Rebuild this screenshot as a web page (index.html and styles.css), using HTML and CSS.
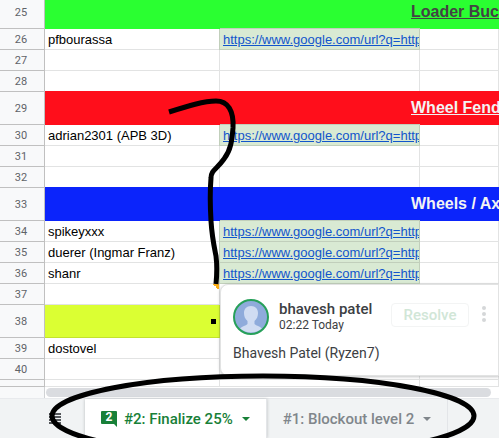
FILE: index.html
```html
<!DOCTYPE html>
<html lang="en">
<head>
    <meta charset="UTF-8">
    <title>Spreadsheet</title>
    <link rel="stylesheet" href="styles.css">
</head>
<body>
    <div class="app">
        <main class="sheet">
            <table class="grid">
                <colgroup>
                    <col class="col-num">
                    <col class="col-name">
                    <col class="col-url">
                    <col>
                </colgroup>
                <tbody>
                    <tr class="first"><th>25</th><td colspan="3" class="heading green">Loader Buc</td></tr>
                    <tr><th>26</th><td>pfbourassa</td><td class="link"><a href="#">https://www.google.com/url?q=http</a></td><td></td></tr>
                    <tr><th>27</th><td></td><td></td><td></td></tr>
                    <tr><th>28</th><td></td><td></td><td></td></tr>
                    <tr class="tall"><th>29</th><td colspan="3" class="heading red">Wheel Fend</td></tr>
                    <tr><th>30</th><td>adrian2301 (APB 3D)</td><td class="link"><a href="#">https://www.google.com/url?q=http</a></td><td></td></tr>
                    <tr><th>31</th><td></td><td></td><td></td></tr>
                    <tr><th>32</th><td></td><td></td><td></td></tr>
                    <tr class="tall"><th>33</th><td colspan="3" class="heading blue">Wheels / Ax</td></tr>
                    <tr><th>34</th><td>spikeyxxx</td><td class="link"><a href="#">https://www.google.com/url?q=http</a></td><td></td></tr>
                    <tr><th>35</th><td>duerer (Ingmar Franz)</td><td class="link"><a href="#">https://www.google.com/url?q=http</a></td><td></td></tr>
                    <tr><th>36</th><td>shanr</td><td class="link"><a href="#">https://www.google.com/url?q=http</a></td><td></td></tr>
                    <tr><th>37</th><td class="noted"></td><td></td><td></td></tr>
                    <tr class="tall"><th>38</th><td class="yellow"><span class="dot"></span></td><td class="yellow"></td><td class="yellow"></td></tr>
                    <tr><th>39</th><td>dostovel</td><td></td><td></td></tr>
                    <tr><th>40</th><td></td><td></td><td></td></tr>
                    <tr class="last"><th></th><td></td><td></td><td></td></tr>
                </tbody>
            </table>

            <section class="comment">
                <header class="comment-head">
                    <svg class="avatar" width="36" height="36" viewBox="0 0 36 36">
                        <circle cx="18" cy="18" r="17" fill="#8fabdb"/>
                        <path d="M18 7c-4.500 0-7 3-7 7 0 3 1 6 3.500 8v3c-2 2-5 2-7.500 4.500A17 17 0 0 0 29 29.500c-2.500-2.500-5.500-2.500-7.500-4.500v-3c2.500-2 3.500-5 3.500-8 0-4-2.500-7-7-7z" fill="#d0dcf2"/>
                        <circle cx="18" cy="18" r="17" fill="none" stroke="#27a05a" stroke-width="2"/>
                    </svg>
                    <div class="who">
                        <div class="author">bhavesh patel</div>
                        <div class="time">02:22 Today</div>
                    </div>
                    <button class="resolve">Resolve</button>
                    <button class="more" aria-label="More options">
                        <svg width="6" height="18" viewBox="0 0 6 18" fill="#d5d7d9">
                            <circle cx="3" cy="3" r="2"/>
                            <circle cx="3" cy="9" r="2"/>
                            <circle cx="3" cy="15" r="2"/>
                        </svg>
                    </button>
                </header>
                <p class="comment-text">Bhavesh Patel (Ryzen7)</p>
            </section>
        </main>

        <div class="scroll">
            <div class="track"><div class="thumb"></div></div>
        </div>

        <footer class="tabs">
            <button class="all-sheets" aria-label="All sheets">
                <svg width="12" height="12" viewBox="0 0 12 12" fill="#55585c">
                    <path d="M0 0h12v2H0zM0 3h12v2H0zM0 6h12v2H0zM0 9h12v2H0z"/>
                </svg>
            </button>
            <button class="tab active">
                <span class="badge">
                    <svg width="16" height="16" viewBox="0 0 16 16" fill="#188038">
                        <path d="M1 0h14a1 1 0 0 1 1 1v15l-3-3H1a1 1 0 0 1-1-1V1a1 1 0 0 1 1-1z"/>
                    </svg>
                    <span class="count">2</span>
                </span>
                <span class="label">#2: Finalize 25%</span>
                <span class="caret"></span>
            </button>
            <button class="tab">
                <span class="label">#1: Blockout level 2</span>
                <span class="caret"></span>
            </button>
        </footer>

        <!-- marker strokes -->
        <svg class="marker" width="499" height="438" viewBox="0 0 499 438">
            <path d="M169 112C188 106 204 101 216 101C228 101 234 111 233 128C232 140 231 150 224 159C217 169 211 170 211 178C210 190 210 204 211 221C212 237 214 246 216 256C217 264 217 274 216 284"/>
            <ellipse cx="263" cy="416" rx="211" ry="40"/>
        </svg>
    </div>
</body>
</html>
```
FILE: styles.css
```css
* {
    box-sizing: border-box;
}
body {
    margin: 0;
    font-family: Roboto, sans-serif;
    background-color: #f1f3f4;
}
button {
    border: none;
    background: none;
    padding: 0;
    font-family: inherit;
    cursor: pointer;
}
.app {
    position: relative;
    display: flex;
    flex-direction: column;
    min-height: 100vh;
    overflow: hidden;
}
.sheet {
    position: relative;
    background-color: white;
}

/* grid */
.grid {
    width: 100%;
    table-layout: fixed;
    border-collapse: separate;
    border-spacing: 0;
}
.col-num {
    width: 45px;
}
.col-name {
    width: 175px;
}
.col-url {
    width: 200px;
}
.grid tr {
    height: 21px;
}
.grid tr.tall {
    height: 33px;
}
.grid tr.first {
    height: 29px;
}
.grid tr.last {
    height: 7px;
}
.grid th {
    padding: 1px 2px 0 0;
    border-right: 1px solid #c0c0c0;
    border-bottom: 1px solid #c0c0c0;
    background-color: #f8f9fa;
    color: #5f6368;
    font-size: 11px;
    font-weight: 400;
    line-height: 16px;
}
.grid td {
    padding: 2px 0 0 3px;
    border-right: 1px solid #e2e3e3;
    border-bottom: 1px solid #e2e3e3;
    font-family: "Liberation Sans", Arial, sans-serif;
    font-size: 13px;
    line-height: 18px;
    white-space: nowrap;
    overflow: hidden;
}
.grid tr.last th,
.grid tr.last td {
    padding: 0;
}
.grid tr.first th,
.grid tr.first td {
    padding-bottom: 4px;
}
.grid td.link {
    background-color: #d9ead3;
    border-color: #c1cfbb;
    box-shadow: 0 -1px #c1cfbb, -1px 0 #c1cfbb;
}
.link a {
    color: #1155cc;
}
.grid td.heading {
    padding-top: 0;
    padding-left: 366px;
    border-right: none;
    font-size: 16px;
    font-weight: 700;
}
.grid td.green {
    background-color: #2aff31;
    border-color: #2aff31;
    color: #434343;
    text-decoration: underline;
}
.grid td.red {
    background-color: #ff0e1b;
    border-color: #ff0e1b;
    box-shadow: 0 -1px #ff0e1b;
    color: #f3f3f3;
    text-decoration: underline;
}
.grid td.blue {
    background-color: #0b24fb;
    border-color: #0b24fb;
    box-shadow: 0 -1px #0b24fb;
    color: #f3f3f3;
}
.grid td.yellow {
    padding-top: 0;
    padding-right: 3px;
    background-color: #dbff33;
    border-color: #c3e22e;
}
.dot {
    display: block;
    width: 5px;
    height: 5px;
    margin-left: auto;
    background-color: black;
}
.grid td.noted {
    background: linear-gradient(to bottom left, #fbae17 50%, transparent 50%) top right / 6px 6px no-repeat;
}

/* comment */
.comment {
    position: absolute;
    top: 284px;
    left: 220px;
    right: 0;
    padding: 14px 9px 13px 12px;
    border: 1px solid #e2e3e3;
    border-radius: 8px 0 0 8px;
    background-color: white;
    box-shadow: 0 1px 3px rgba(60, 64, 67, 0.3);
}
.comment-head {
    display: flex;
    align-items: flex-start;
}
.avatar {
    flex: none;
}
.who {
    flex: 1;
    margin-left: 10px;
    padding-top: 2px;
    color: #3c4043;
}
.author {
    font-size: 15px;
    font-weight: 500;
    line-height: 16px;
}
.time {
    font-size: 12px;
    line-height: 16px;
}
.resolve {
    width: 78px;
    height: 24px;
    margin-top: 4px;
    margin-right: 10px;
    border: 1px solid #f3f4f4;
    border-radius: 4px;
    color: #d1e6d7;
    font-size: 15px;
    font-weight: 500;
}
.more {
    display: flex;
    margin-top: 6px;
    padding: 0 2px;
}
.comment-text {
    margin: 9px 0 0;
    color: #3c4043;
    font-size: 14px;
    line-height: 18px;
}

/* scrollbar */
.scroll {
    height: 11px;
    padding-left: 44px;
    background-color: #f8f9fa;
}
.track {
    height: 100%;
    padding: 1px 8px 1px 1px;
    border-left: 1px solid #d0d2d4;
    background-color: white;
}
.thumb {
    height: 9px;
    border-radius: 5px;
    background-color: #dadce0;
}

/* sheet tabs */
.tabs {
    flex: 1;
    display: flex;
    min-height: 40px;
    border-top: 1px solid #e8eaed;
    background-color: #f1f3f4;
}
.all-sheets {
    display: flex;
    align-items: center;
    width: 85px;
    padding-left: 49px;
}
.tab {
    display: flex;
    align-items: center;
    padding: 0 16px;
    border-right: 1px solid #e3e5e8;
    color: #80868b;
    font-size: 15px;
    font-weight: 500;
}
.tab.active {
    background-color: white;
    box-shadow: 0 0 3px rgba(60, 64, 67, 0.3);
    color: #188038;
}
.badge {
    position: relative;
    display: flex;
    margin-right: 7px;
}
.count {
    position: absolute;
    top: 0;
    left: 0;
    width: 16px;
    color: white;
    font-size: 12px;
    font-weight: 700;
    line-height: 13px;
    text-align: center;
}
.caret {
    margin-left: 9px;
    border: 4px solid transparent;
    border-top-color: currentColor;
    border-bottom: none;
}

/* marker */
.marker {
    position: absolute;
    top: 0;
    left: 0;
    fill: none;
    stroke: black;
    stroke-width: 5px;
    pointer-events: none;
}
```
